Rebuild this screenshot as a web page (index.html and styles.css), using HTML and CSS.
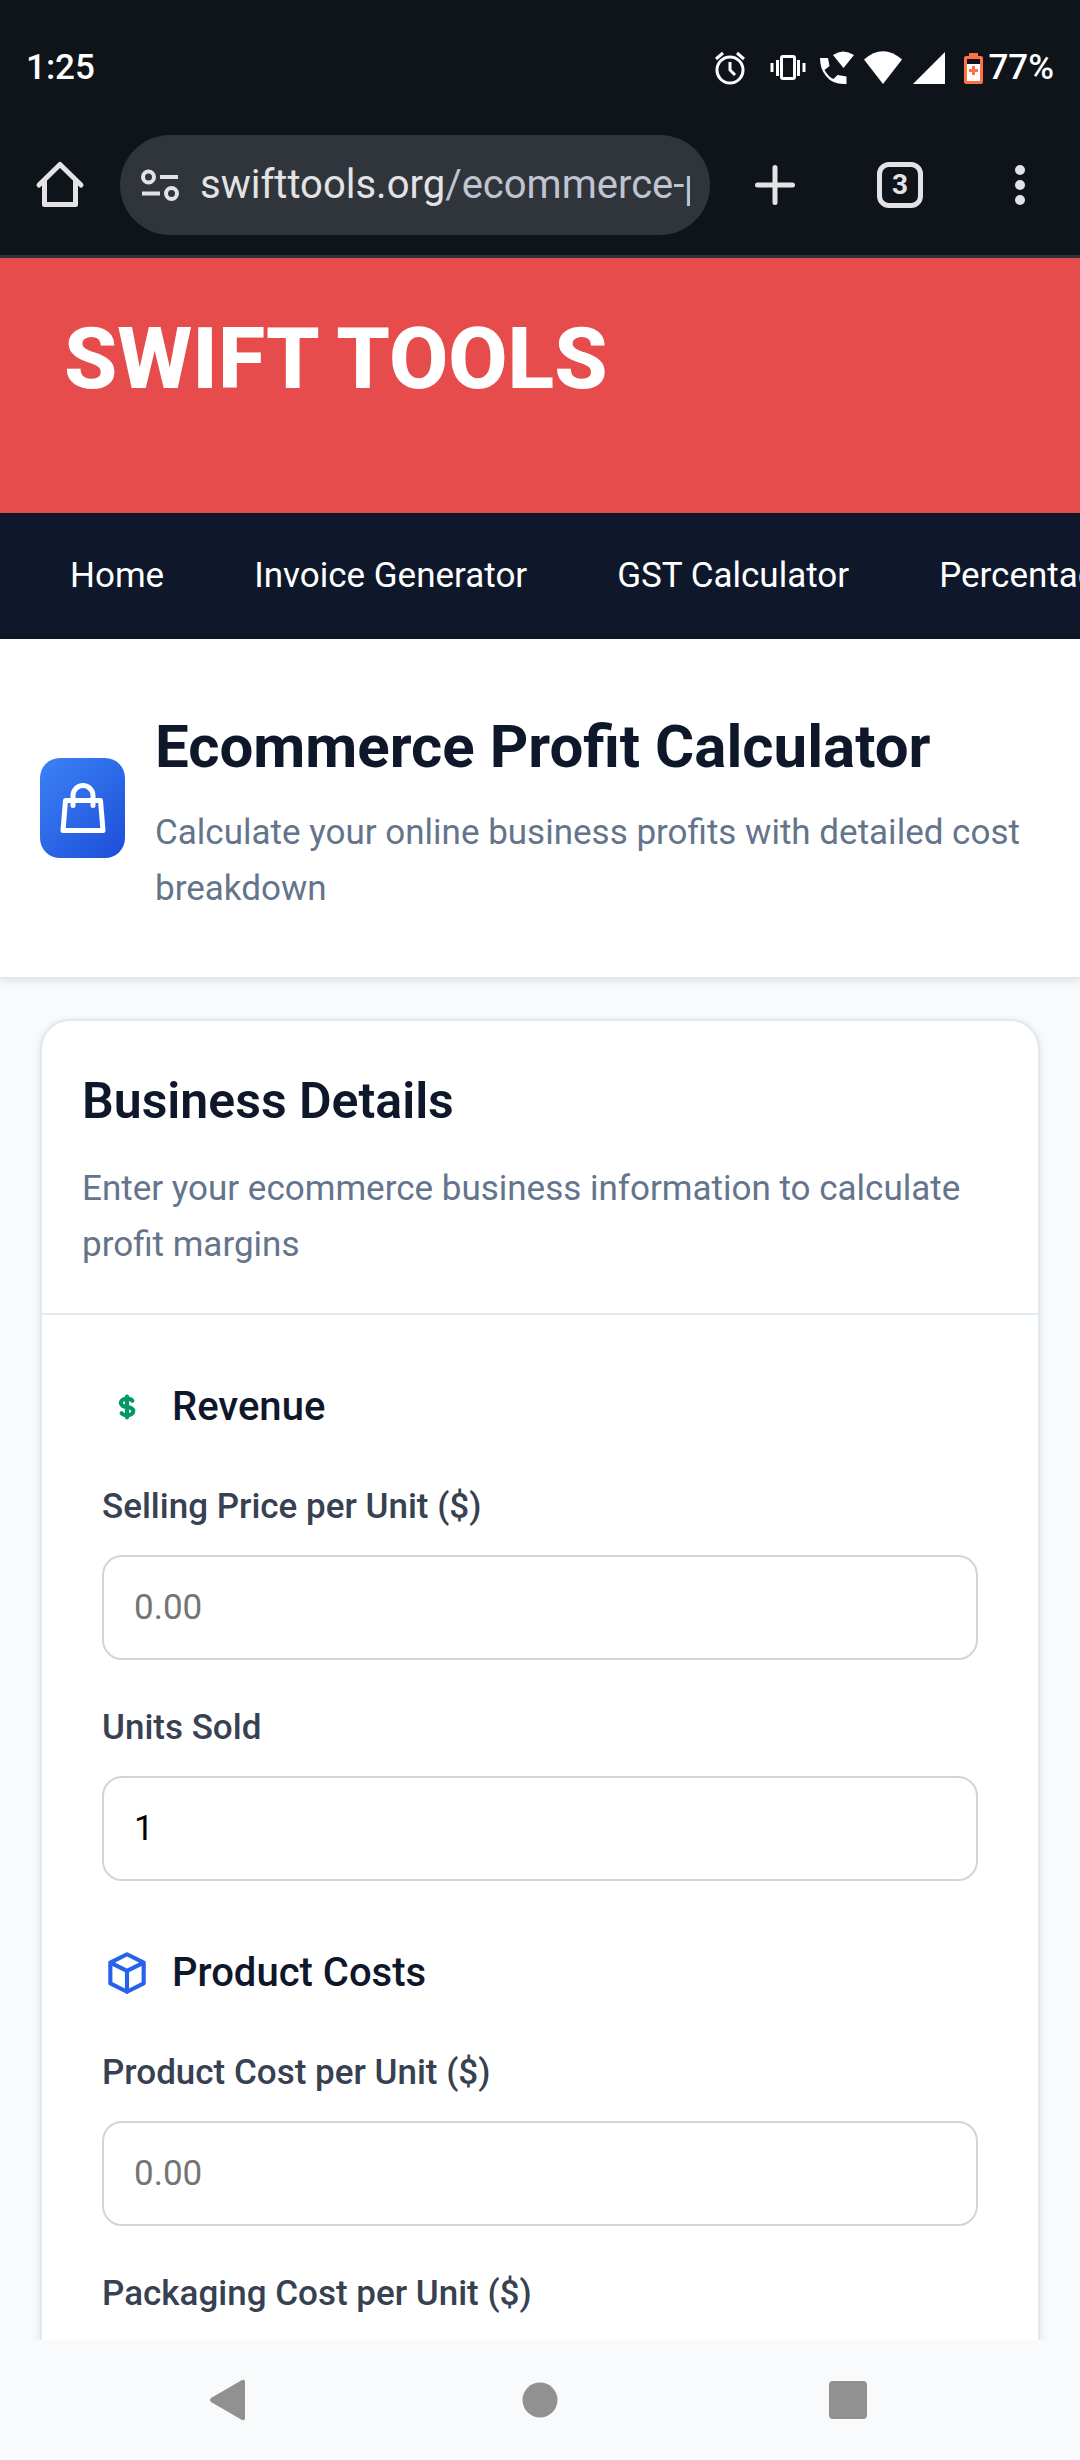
FILE: index.html
```html
<!DOCTYPE html>
<html lang="en">

<head>
  <meta charset="utf-8">
  <meta name="viewport" content="width=device-width, initial-scale=1">
  <title>Ecommerce Profit Calculator</title>
  <link rel="stylesheet" href="styles.css">
</head>

<body>
  <div class="status-bar">
    <span>1:25</span>
    <div class="status-icons">
      <svg class="alarm" width="36" height="36" viewBox="0 0 36 36" fill="none" stroke="#fff" stroke-width="3">
        <circle cx="15" cy="20" r="13" />
        <path d="M15 12v8l5 5M1 9l7-6M29 9l-7-6" />
      </svg>
      <svg width="36" height="36" viewBox="0 0 36 36" fill="none" stroke="#fff" stroke-width="3">
        <rect x="8.500" y="6.500" width="13" height="22" rx="1.500" />
        <path d="M4.500 10v16M25.500 10v16M-1 13v9M31 13v9" />
      </svg>
      <svg width="36" height="36" viewBox="0 0 36 36" fill="#fff">
        <path d="M1 8h8l1.500 8-5 4q4 7 9 9l4-4 9 1.500V34Q14 35 7 26 1 19 1 8z" />
        <path d="M14 5q10-7 21 0L24.500 18z" />
      </svg>
      <svg width="36" height="36" viewBox="0 0 36 36" fill="#fff">
        <path d="M-1 9.500Q18-7 37 9.500L18 34z" />
      </svg>
      <svg width="36" height="36" viewBox="0 0 36 36" fill="#fff">
        <path d="M34 2v32H2z" />
      </svg>
      <div class="battery">
        <svg width="26" height="36" viewBox="0 0 26 36">
          <path fill="#ff7043" d="M12 3h9v3h3q2 0 2 2v24q0 2-2 2H9q-2 0-2-2V8q0-2 2-2h3z" />
          <path fill="#0f141b" d="M10 9h13v5H10z" />
          <path fill="#fff" d="M10 14h13v17H10z" />
          <path fill="#ff7043" d="M15 16h3v3h3v3h-3v3h-3v-3h-3v-3h3z" />
        </svg>
        <span>77%</span>
      </div>
    </div>
  </div>

  <div class="toolbar">
    <button class="tool" aria-label="Home">
      <svg width="50" height="50" viewBox="0 0 50 50" fill="none" stroke="#e3e3e6" stroke-width="5" stroke-linecap="round" stroke-linejoin="round">
        <path d="M4 25L25 4.500 46 25M9.500 22v22.500h31V22" />
      </svg>
    </button>
    <button class="url-bar">
      <svg width="40" height="36" viewBox="0 0 40 36" fill="none" stroke="#e3e3e6" stroke-width="4">
        <circle cx="8.500" cy="10" r="5.500" />
        <circle cx="31.500" cy="26.500" r="5.500" />
        <path d="M20 10h18M2 26.500h18" />
      </svg>
      <span class="url">swifttools.org<span class="path">/ecommerce-profit</span></span>
    </button>
    <button class="tool new-tab" aria-label="New tab">
      <svg width="50" height="50" viewBox="0 0 50 50" stroke="#e3e3e6" stroke-width="5" stroke-linecap="round">
        <path d="M25 7.500v35M7.500 25h35" />
      </svg>
    </button>
    <button class="tool" aria-label="Tabs"><span class="tab-count">3</span></button>
    <button class="tool" aria-label="Menu">
      <svg width="50" height="50" viewBox="0 0 50 50" fill="#e3e3e6">
        <circle cx="25" cy="10" r="5" />
        <circle cx="25" cy="25" r="5" />
        <circle cx="25" cy="40" r="5" />
      </svg>
    </button>
  </div>

  <div class="page">
    <header class="brand"><a href="#">SWIFT TOOLS</a></header>

    <nav class="main-nav">
      <a href="#">Home</a>
      <a href="#">Invoice Generator</a>
      <a href="#">GST Calculator</a>
      <a href="#">Percentage Calculator</a>
    </nav>

    <div class="tool-header">
      <div class="tool-icon">
        <svg width="60" height="60" viewBox="0 0 24 24" fill="none" stroke="#fff" stroke-width="2" stroke-linecap="round" stroke-linejoin="round">
          <path d="M16 11V7a4 4 0 0 0-8 0v4M5 9h14l1 12H4L5 9z" />
        </svg>
      </div>
      <div>
        <h1>Ecommerce Profit Calculator</h1>
        <p>Calculate your online business profits with detailed cost breakdown</p>
      </div>
    </div>

    <div class="card">
      <div class="card-header">
        <h2>Business Details</h2>
        <p>Enter your ecommerce business information to calculate profit margins</p>
      </div>

      <form class="card-body">
        <section>
          <h3>
            <svg width="50" height="50" viewBox="0 0 24 24" fill="none" stroke="#059669" stroke-width="2" stroke-linecap="round" stroke-linejoin="round">
              <path d="M12 8c-1.657 0-3 .895-3 2s1.343 2 3 2 3 .895 3 2-1.343 2-3 2m0-8c1.110 0 2.080.402 2.599 1M12 8V7m0 1v8m0 0v1m0-1c-1.110 0-2.080-.402-2.599-1" />
            </svg>
            Revenue
          </h3>
          <div class="field">
            <label for="price">Selling Price per Unit ($)</label>
            <input id="price" type="text" inputmode="decimal" placeholder="0.00">
          </div>
          <div class="field">
            <label for="units">Units Sold</label>
            <input id="units" type="text" inputmode="numeric" value="1">
          </div>
        </section>

        <section>
          <h3>
            <svg width="50" height="50" viewBox="0 0 24 24" fill="none" stroke="#2563eb" stroke-width="2" stroke-linecap="round" stroke-linejoin="round">
              <path d="M20 7l-8-4-8 4m16 0l-8 4m8-4v10l-8 4m0-10L4 7m8 4v10M4 7v10l8 4" />
            </svg>
            Product Costs
          </h3>
          <div class="field">
            <label for="cost">Product Cost per Unit ($)</label>
            <input id="cost" type="text" inputmode="decimal" placeholder="0.00">
          </div>
          <div class="field">
            <label for="packaging">Packaging Cost per Unit ($)</label>
            <input id="packaging" type="text" inputmode="decimal" placeholder="0.00">
          </div>
        </section>
      </form>
    </div>
  </div>

  <div class="system-nav">
    <button aria-label="Back">
      <svg width="40" height="40" viewBox="0 0 40 40" fill="#919191">
        <path d="M32 0q3-1 3 2v36q0 3-3 2L1 22q-2-2 0-4z" />
      </svg>
    </button>
    <button aria-label="Home screen">
      <svg width="40" height="40" viewBox="0 0 40 40" fill="#919191">
        <circle cx="20" cy="20" r="17.500" />
      </svg>
    </button>
    <button aria-label="Recent apps">
      <svg width="40" height="40" viewBox="0 0 40 40" fill="#919191">
        <rect x="-1" y="1" width="38" height="38" rx="4" />
      </svg>
    </button>
  </div>
</body>

</html>
```

FILE: styles.css
```css
* {
  box-sizing: border-box;
  margin: 0;
  padding: 0;
}

body {
  display: flex;
  flex-direction: column;
  height: 100vh;
  overflow: hidden;
  background: #f8fafc;
  color: #0f172a;
  font-family: Roboto, sans-serif;
  font-size: 35px;
  line-height: 56px;
}

button {
  border: 0;
  background: none;
  font: inherit;
}

a {
  color: inherit;
  text-decoration: none;
}

svg {
  display: block;
  flex: none;
  overflow: visible;
}

/* phone status bar */
.status-bar {
  display: flex;
  justify-content: space-between;
  padding: 40px 26px 24px;
  background: #0f141b;
  color: #fff;
  font-weight: 500;
}

.status-icons {
  display: flex;
  align-items: center;
  gap: 10px;
}

.alarm {
  margin-right: 12px;
}

.battery {
  display: flex;
  align-items: center;
  gap: 5px;
}

/* browser toolbar */
.toolbar {
  display: flex;
  align-items: center;
  padding: 15px 0 20px;
  border-bottom: 3px solid #303338;
  background: #0f141b;
  color: #e3e3e6;
}

.tool {
  display: flex;
  flex: none;
  align-items: center;
  justify-content: center;
  width: 120px;
}

.new-tab {
  width: 130px;
}

.url-bar {
  display: flex;
  flex: 1;
  align-items: center;
  gap: 20px;
  min-width: 0;
  height: 100px;
  padding: 0 20px;
  border-radius: 50px;
  background: #30343b;
  color: #e3e3e6;
  font-size: 40px;
  text-align: left;
}

.url {
  flex: 1;
  overflow: hidden;
  white-space: nowrap;
}

.path {
  color: #bfc4d0;
}

.tab-count {
  width: 46px;
  height: 46px;
  border: 5px solid #e3e3e6;
  border-radius: 12px;
  color: #e3e3e6;
  font-size: 28px;
  font-weight: 700;
  line-height: 36px;
}

/* site */
.page {
  flex: 1;
  min-height: 0;
  overflow: hidden;
}

.brand {
  padding: 45px 64px 98px;
  background: #e64c4c;
  color: #fff;
  font-size: 86px;
  font-weight: 800;
  line-height: 112px;
}

.main-nav {
  display: flex;
  gap: 90px;
  padding: 35px 70px;
  overflow: hidden;
  background: #0f172a;
  color: #fff;
  white-space: nowrap;
}

.tool-header {
  display: flex;
  align-items: center;
  gap: 30px;
  padding: 60px 40px;
  border-bottom: 2px solid #e2e8f0;
  background: #fff;
  box-shadow: 0 2px 8px rgba(0, 0, 0, 0.1);
}

.tool-icon {
  display: flex;
  align-items: center;
  justify-content: center;
  flex: none;
  width: 85px;
  height: 100px;
  border-radius: 20px;
  background: linear-gradient(135deg, #3b82f6, #1d4ed8);
}

h1 {
  margin-bottom: 10px;
  font-size: 60px;
  font-weight: 700;
  line-height: 96px;
}

p {
  color: #64748b;
}

.card {
  margin: 40px;
  border: 2px solid #e2e8f0;
  border-radius: 30px;
  background: #fff;
  box-shadow: 0 2px 8px rgba(0, 0, 0, 0.1);
}

.card-header {
  padding: 40px;
  border-bottom: 2px solid #e2e8f0;
}

h2 {
  margin-bottom: 20px;
  font-size: 50px;
  font-weight: 600;
  line-height: 80px;
}

.card-body {
  display: flex;
  flex-direction: column;
  gap: 60px;
  padding: 60px;
}

section {
  display: flex;
  flex-direction: column;
  gap: 40px;
}

h3 {
  display: flex;
  align-items: center;
  gap: 20px;
  font-size: 40px;
  font-weight: 500;
  line-height: 64px;
}

.field {
  display: flex;
  flex-direction: column;
  gap: 20px;
}

label {
  color: #374151;
  font-weight: 500;
}

input {
  width: 100%;
  padding: 30px;
  border: 2px solid #d1d5db;
  border-radius: 20px;
  background: #fff;
  color: #000;
  font: inherit;
  line-height: 41px;
}

input::placeholder {
  color: #757575;
}

/* phone navigation buttons */
.system-nav {
  display: flex;
  justify-content: space-around;
  padding: 40px 75px;
  background: #f8fafc;
}
```
